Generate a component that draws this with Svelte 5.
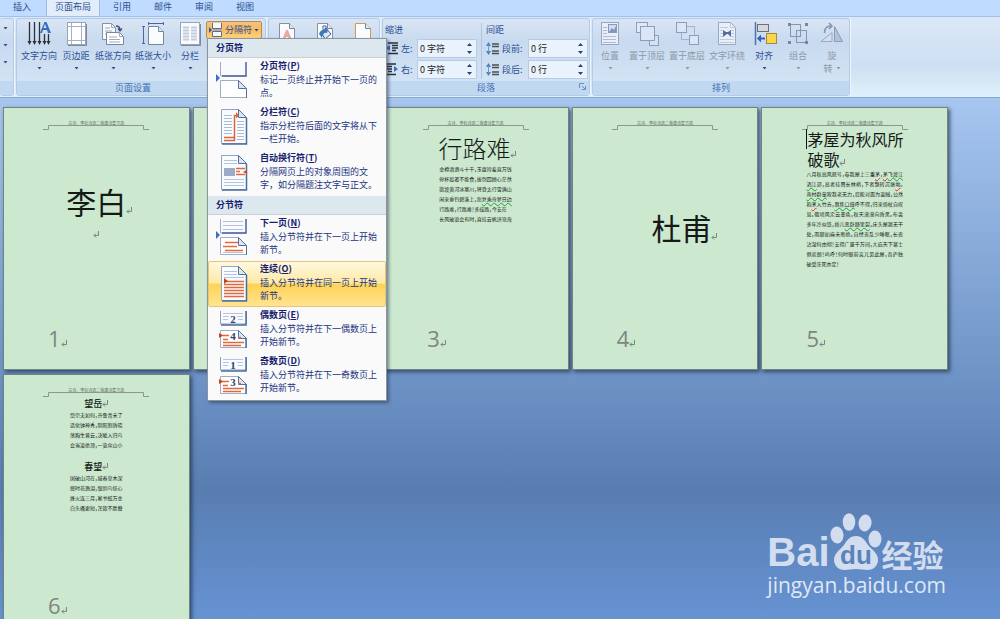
<script lang="ts">
    const tabs = ['插入', '页面布局', '引用', '邮件', '审阅', '视图'];

    const setupTools = [
        { icon: 'direction', label: '文字方向' },
        { icon: 'margins', label: '页边距' },
        { icon: 'orientation', label: '纸张方向' },
        { icon: 'size', label: '纸张大小' },
        { icon: 'columns', label: '分栏' }
    ];

    const arrangeTools = [
        { icon: 'position', label: '位置', disabled: true },
        { icon: 'front', label: '置于顶层', disabled: true },
        { icon: 'back', label: '置于底层', disabled: true },
        { icon: 'wrap', label: '文字环绕', disabled: true },
        { icon: 'align', label: '对齐', disabled: false },
        { icon: 'group', label: '组合', disabled: true }
    ];

    const breakMenu = [
        {
            title: '分页符',
            items: [
                { icon: 'page', name: '分页符', key: 'P', lines: ['标记一页终止并开始下一页的', '点。'] },
                { icon: 'column', name: '分栏符', key: 'C', lines: ['指示分栏符后面的文字将从下', '一栏开始。'] },
                { icon: 'textwrap', name: '自动换行符', key: 'T', lines: ['分隔网页上的对象周围的文', '字，如分隔题注文字与正文。'] }
            ]
        },
        {
            title: '分节符',
            items: [
                { icon: 'next', name: '下一页', key: 'N', lines: ['插入分节符并在下一页上开始', '新节。'] },
                { icon: 'continuous', name: '连续', key: 'O', lines: ['插入分节符并在同一页上开始', '新节。'] },
                { icon: 'even', name: '偶数页', key: 'E', lines: ['插入分节符并在下一偶数页上', '开始新节。'] },
                { icon: 'odd', name: '奇数页', key: 'D', lines: ['插入分节符并在下一奇数页上', '开始新节。'] }
            ]
        }
    ];

    let activeTab = $state('页面布局');
    let hovered = $state('O');
    let indent = $state({ left: '0 字符', right: '0 字符' });
    let spacing = $state({ before: '0 行', after: '0 行' });

    // a segment is [text, optional proofing mark]
    const xinglunan = [
        [['金樽清酒斗十千，玉盘珍羞直万钱']],
        [['停杯投箸不能食，拔剑四顾心茫然']],
        [['欲渡黄河冰塞川，将登太行雪满山']],
        [['闲来垂钓碧溪上，忽'], ['复乘舟梦日边', 'grammar']],
        [['行路难，行路难！多歧路，今安在']],
        [['长风破浪会有时，直挂云帆济沧海']]
    ];

    const maowu = [
        [['八月秋高风怒号，卷我屋上三重'], ['茅', 'spell'], ['，'], ['茅', 'spell'], ['飞渡江', 'grammar']],
        [['洒江', 'grammar'], ['郊，高者挂罥长林梢，下者飘转沉塘'], ['坳', 'spell'], ['。']],
        [['南村群童', 'grammar'], ['欺我老无力，忍能对面为盗贼，公然']],
        [['抱'], ['茅', 'spell'], ['入竹去，'], ['唇焦口燥', 'grammar'], ['呼不得，归来倚杖自叹']],
        [['息。俄顷风定云墨色，秋天漠漠向昏黑。布衾']],
        [['多年冷似铁，娇儿'], ['恶卧踏里裂', 'grammar'], ['，床头屋漏无干']],
        [['处，雨脚如麻未断绝。自经丧乱少睡眠，长夜']],
        [['沾湿何由彻！安得广厦千万间，大庇天下寒士']],
        [['俱欢颜！呜呼！何时眼前突兀见此屋，吾庐独']],
        [['破受冻死亦足！']]
    ];

    const wangyue = [
        [['岱宗夫如何，齐鲁青未了']],
        [['造化钟神秀，阴阳割昏晓']],
        [['荡胸生曾云，决眦入归鸟']],
        [['会当凌绝顶，一览众山小']]
    ];

    const chunwang = [
        [['国破山河在，城春草木深']],
        [['感时花溅泪，恨别鸟惊心']],
        [['烽火连三月，家书抵万金']],
        [['白头搔更短，浑欲不胜簪']]
    ];
</script>

{#snippet caret()}
    <svg class="caret" width="5" height="3" viewBox="0 0 5 3"><path d="M.5 0h4l-2 2.500z" fill="currentColor" /></svg>
{/snippet}

{#snippet toolIcon(name)}
    <svg class="tool-icon" width="26" height="26" viewBox="0 0 26 26" fill="none">
        {#if name === 'direction'}
            <path d="M3.500 1v20M8.500 1v20M13.500 1v20M18.500 13v8M22.500 13v8" stroke="#2e3238" stroke-width="1.300" />
            <path d="M1.500 20h4l-2 4zM6.500 20h4l-2 4zM11.500 20h4l-2 4zM16.500 20h4l-2 4zM20.500 20h4l-2 4z" fill="#2e3238" />
            <path d="M14 12l4.500-11h2l4.500 11h-3l-1-3h-4l-1 3zM17.500 7h3L19 3z" fill="#3b6bc0" />
        {:else if name === 'margins'}
            <rect x="4.500" y="1.500" width="18" height="22" fill="#fff" stroke="#98a5b9" />
            <path d="M8.500 2v21M18.500 2v21M5 5.500h17M5 19.500h17" stroke="#a5b0c2" />
            <path d="M5 24.500h18.500V3" stroke="#7c899e" />
        {:else if name === 'orientation'}
            <path d="M2.500 2.500h9l4 4v12h-13z" fill="#f7f9fc" stroke="#8391a9" />
            <path d="M11.500 2.500v4h4M5 7h5M5 10h7M5 13h5" stroke="#9faabd" />
            <path d="M6.500 11.500h13l4 4v8h-17z" fill="#fff" stroke="#7586a2" />
            <path d="M19.500 11.500v4h4M9 16h8M9 18.500h11M9 21h11" stroke="#9faabd" />
            <path d="M16 5c3 0 4 2 4 4M18 7.500l2 2.500 2-2.500" stroke="#44516c" stroke-width="1.300" />
        {:else if name === 'size'}
            <path d="M8.500 5.500h10l5 5v13h-15z" fill="#fbfcfe" stroke="#7586a2" />
            <path d="M18.500 5.500v5h5" fill="#dfe7f3" stroke="#7586a2" />
            <path d="M8 2.500h16M8.500 1v3M23.500 1v3M3.500 5v18M2 5.500h3M2 22.500h3" stroke="#4a64a6" />
        {:else if name === 'columns'}
            <rect x="3.500" y="1.500" width="19" height="22" fill="#f8fafd" stroke="#98a5b9" />
            <path d="M6 6.500h6M6 9.500h6M6 12.500h6M6 15.500h6M6 18.500h6M14 6.500h6M14 9.500h6M14 12.500h6M14 15.500h6M14 18.500h6" stroke="#c3cddf" stroke-width="2" />
            <path d="M4 24.500h19.500V3" stroke="#7c899e" />
        {:else if name === 'position'}
            <rect x="4.500" y="1.500" width="17" height="22" fill="#e9effa" stroke="#98a7c3" />
            <rect x="11.500" y="3.500" width="8" height="8" fill="#d1dcef" stroke="#8798bb" />
            <path d="M12 11l3-4 2 2 2-4v6z" fill="#8294b8" />
            <path d="M6 6.500h4M6 9.500h4M6 12.500h4M6 15.500h13M6 18.500h13M6 21.500h13" stroke="#aebbd2" />
        {:else if name === 'front'}
            <rect x="2.500" y="1.500" width="11" height="10" fill="#e1e9f6" stroke="#8f9db8" />
            <rect x="15.500" y="14.500" width="9" height="10" fill="#d5e0f1" stroke="#8f9db8" />
            <rect x="6.500" y="5.500" width="14" height="14" fill="#dae5f5" stroke="#8f9db8" />
        {:else if name === 'back'}
            <rect x="7.500" y="5.500" width="13" height="13" fill="#d1dff2" stroke="#a7b3ca" />
            <rect x="2.500" y="1.500" width="10" height="10" fill="#dae5f5" stroke="#8f9db8" />
            <rect x="15.500" y="14.500" width="9" height="9" fill="#dae5f5" stroke="#8f9db8" />
        {:else if name === 'wrap'}
            <path d="M4.500 1.500h12l5 5v17h-17z" fill="#e8eff9" stroke="#98a7c3" />
            <path d="M16.500 1.500v5h5M6 6.500h8M6 9.500h3M17 9.500h3M6 12.500h3M17 12.500h3M6 15.500h3M17 15.500h3M6 18.500h14M6 21.500h14" stroke="#c0cbde" />
            <path d="M9 9l3 2h2l3-2v7l-3-3h-1l-4 3z" fill="#536d9c" />
        {:else if name === 'align'}
            <path d="M4.500 1v23" stroke="#5471a6" stroke-width="1.500" />
            <rect x="6.500" y="3.500" width="11" height="7" fill="#d6d8dc" stroke="#68717f" />
            <rect x="15.500" y="12.500" width="10" height="10" fill="#fbd54b" stroke="#a4883c" />
            <path d="M6 17.500l4-4v3h4v2h-4v3z" fill="#3362bd" />
        {:else if name === 'group'}
            <rect x="5.500" y="3.500" width="10" height="12" stroke="#8495b3" />
            <rect x="11.500" y="9.500" width="10" height="12" stroke="#8495b3" />
            <path d="M3 2h3v3H3zM20 2h3v3h-3zM3 20h3v3H3zM20 20h3v3h-3z" fill="#7587a8" />
        {:else if name === 'rotate'}
            <path d="M2 20.500h11v-9z" fill="#d5dfee" stroke="#9aa8c0" />
            <path d="M15.500 20.500V5.500l8 15z" fill="#b3c2d8" stroke="#8b9bb8" />
            <path d="M5.500 12c0-5 3-7 6-7M10 2l3 3-3 3" stroke="#8193b3" stroke-width="1.500" />
        {/if}
    </svg>
{/snippet}

{#snippet backgroundIcon(name)}
    <svg width="20" height="22" viewBox="0 0 20 22" fill="none">
        <path d="M2.500 1.500h10l5 5v15h-15z" fill="#fbfcfe" stroke={name === 'border' ? '#d7964a' : '#8391a9'} />
        <path d="M12.500 1.500v5h5" fill="#e2e9f4" stroke="#7586a2" />
        {#if name === 'watermark'}
            <path d="M5 18l4-10h2l4 10h-3l-1-3H9l-1 3z" fill="#e9aaa5" />
        {:else if name === 'color'}
            <path d="M6 10l5-4 5 6-6 5z" fill="#dbe7f5" stroke="#45608a" />
            <path d="M4 12c1-4 6-6 9-4l-1 3c-3-1-4 1-5 5z" fill="#3c77b8" />
            <path d="M8 7V4h3v4" stroke="#45608a" />
        {/if}
    </svg>
{/snippet}

{#snippet menuIcon(name)}
    <svg class="menu-icon" width="34" height="40" viewBox="0 0 34 40" fill="none">
        {#if name === 'page' || name === 'next'}
            <path d="M5 1v13h25V1z" fill="#f8faff" />
            <path d="M4.500 1v14h26" stroke="#9eacc4" />
            <path d="M30 1v14H6" stroke="#4a6499" stroke-width="1.500" />
            <path d="M4.500 19.500h18l8 8v9h-26z" fill="#fff" stroke="#a0aec5" />
            <path d="M22.500 19.500v8h8z" fill="#dae4f2" stroke="#5b7098" />
            <path d="M30.500 28v9" stroke="#5b7098" />
            <path d="M0 13l4 4-4 4z" fill="#3a6fc9" />
            {#if name === 'next'}
                <path d="M7 3.500h20M7 7.500h20M7 11.500h20M7 34.500h20" stroke="#b4c1d6" />
                <path d="M9 24.500h13M7 28.500h14M9 32.500h18" stroke="#e2693c" stroke-width="1.500" />
            {/if}
        {:else if name === 'even' || name === 'odd'}
            <path d="M4.500 1v13h26V1" fill="#f8faff" stroke="#8b9dbb" />
            <path d="M30 1v14H5" stroke="#4a6f9c" stroke-width="1.500" />
            <path d="M7 3.500h20M7 6.500h6M21 6.500h6M7 9.500h5M22 9.500h5" stroke="#b9c6da" />
            <path d="M4.500 20.500h18l8 8v9h-26z" fill="#fff" stroke="#9eacc4" />
            <path d="M22.500 20.500v8h8z" fill="#dbe6f4" stroke="#56709d" />
            <path d="M30 28v10" stroke="#4a6f9c" stroke-width="1.500" />
            <path d="M4 25.500h9M22 27.500h3M7 29.500h5M7 32.500h21M7 35.500h18" stroke="#e2693c" stroke-width="1.300" />
            <path d="M3 23l4 2.500L3 28z" fill="#c8431d" />
            <text x="17" y="13" class="icon-number">{name === 'even' ? 2 : 1}</text>
            <text x="17" y="30" class="icon-number">{name === 'even' ? 4 : 3}</text>
        {:else}
            <path d="M5.500 2.500h17l8 8v26h-25z" fill="#f8fbff" stroke="#92a4c0" />
            <path d="M22.500 2.500v8h8z" fill="#dbe6f4" stroke="#56709d" />
            <path d="M30.500 11v26H6" stroke="#4a6f9c" stroke-width="1.500" />
            {#if name === 'column'}
                <path d="M8 8.500h8M8 11.500h8M8 14.500h8M8 17.500h8M8 20.500h8M8 23.500h8M8 26.500h8M21 14.500h7M21 17.500h7M21 20.500h7M21 23.500h7M21 26.500h7M21 29.500h7M21 32.500h7" stroke="#aabbd3" />
                <path d="M8 30.500h10M8 33.500h10.500V8.500h3" stroke="#dd653b" stroke-width="1.500" />
                <path d="M20 5l3 3.500-3 3z" fill="#dd653b" />
            {:else if name === 'textwrap'}
                <path d="M8 7.500h13M8 10.500h13M8 26.500h20M8 29.500h20M8 32.500h20" stroke="#b6c4d8" />
                <rect x="8" y="15" width="11" height="8" fill="#9aacc9" />
                <path d="M20 15.500h9M20 18.500h4M20 21.500h9" stroke="#e2693c" stroke-width="1.500" />
                <path d="M27 19l4-2v4z" fill="#c8431d" />
            {:else}
                <path d="M8 7.500h13M8 10.500h13M8 13.500h20" stroke="#b6c4d8" />
                <path d="M11 17.500h17M8 20.500h20M8 23.500h20M8 26.500h20M8 29.500h20M8 32.500h20" stroke="#e2693c" stroke-width="1.500" />
                <path d="M8 14l4 3-4 3z" fill="#c8431d" />
            {/if}
        {/if}
    </svg>
{/snippet}

{#snippet paraIcon(kind)}
    <svg width="14" height="13" viewBox="0 0 14 13" fill="none">
        {#if kind === 'left' || kind === 'right'}
            <g transform={kind === 'right' ? 'translate(14 0) scale(-1 1)' : undefined}>
                <path d="M3 1h10M7 3.500h6M7 6h6M7 8.500h4M3 11.500h10" stroke="#2b2f36" stroke-width="1.500" />
                <path d="M5 3v6L1 6z" fill="#3a6fc9" />
            </g>
        {:else}
            <path d="M6 2h7M6 4.500h7M6 9h7M6 11.500h7" stroke="#4b4f57" stroke-width="1.500" />
            <path d="M0 4l2.500-4L5 4zM0 9l2.500 4L5 9z" fill="#4c7fc4" />
            <path d="M2.500 3v7" stroke="#6f97d0" />
        {/if}
    </svg>
{/snippet}

{#snippet returnMark()}
    <svg class="return" width="6" height="7" viewBox="0 0 6 7" fill="none">
        <path d="M5.500 0v4.500H1M3 2.500l-2 2 2 2" stroke="#7d857f" />
    </svg>
{/snippet}

{#snippet numberField(id, label, kind, store, prop)}
    <div class="field">
        {@render paraIcon(kind)}
        <label for={id}>{label}</label>
        <div class="spin">
            <input {id} type="text" bind:value={store[prop]} />
            <div class="spin-buttons">
                <button aria-label="增加"><svg width="5" height="3" viewBox="0 0 5 3"><path d="M0 3h5L2.500 0z" fill="#26457f" /></svg></button>
                <button aria-label="减少"><svg width="5" height="3" viewBox="0 0 5 3"><path d="M0 0h5L2.500 3z" fill="#26457f" /></svg></button>
            </div>
        </div>
    </div>
{/snippet}

{#snippet poem(lines, justified = false)}
    <div class="poem" class:justified>
        {#each lines as line}
            <p>{#each line as [text, mark]}<span class={mark}>{text}</span>{/each}</p>
        {/each}
    </div>
{/snippet}

{#snippet page(number, content)}
    <article class="page">
        <header>
            <span>古诗、李杜诗选二卷唐诗集节选</span>
            <svg width="106" height="6" viewBox="0 0 106 6" fill="none"><path d="M0 4.500h5.500v-4h95v4h5.500" stroke="#8b988e" /></svg>
        </header>
        {@render content()}
        <footer>{number}{@render returnMark()}</footer>
    </article>
{/snippet}

{#snippet pageOne()}
    <h1 class="name">李白{@render returnMark()}</h1>
    <p class="blank">{@render returnMark()}</p>
{/snippet}

{#snippet pageTwo()}{/snippet}

{#snippet pageThree()}
    <h2 class="poem-title">行路难{@render returnMark()}</h2>
    {@render poem(xinglunan)}
{/snippet}

{#snippet pageFour()}
    <h1 class="name right">杜甫{@render returnMark()}</h1>
{/snippet}

{#snippet pageFive()}
    <h2 class="long-title">茅屋为秋风所<br />破歌{@render returnMark()}</h2>
    {@render poem(maowu, true)}
{/snippet}

{#snippet pageSix()}
    <h3>望岳{@render returnMark()}</h3>
    {@render poem(wangyue)}
    <h3 class="second">春望{@render returnMark()}</h3>
    {@render poem(chunwang)}
{/snippet}

<div class="word">
    <nav class="tabs">
        {#each tabs as tab}
            <button class="tab" class:active={tab === activeTab} onclick={() => (activeTab = tab)}>{tab}</button>
        {/each}
    </nav>

    <div class="ribbon">
        <section class="group stub">
            <div class="stub-carets">{@render caret()}{@render caret()}{@render caret()}</div>
            <div class="group-label"></div>
        </section>

        <section class="group setup">
            <div class="tools">
                {#each setupTools as tool}
                    <button class="tool">
                        {@render toolIcon(tool.icon)}
                        <span>{tool.label}</span>
                        {@render caret()}
                    </button>
                {/each}
                <div class="breaks">
                    <button class="breaks-button" aria-haspopup="menu" aria-expanded="true">
                        <svg width="14" height="14" viewBox="0 0 14 14" fill="none">
                            <path d="M3.500 0v5.500h9V0M3.500 13.500v-5h9v5z" fill="#f4f8ff" stroke="#5b7098" />
                            <path d="M0 4l3 3-3 3z" fill="#3056a5" />
                            <path d="M4 7h9" stroke="#8a97ae" />
                        </svg>
                        <span>分隔符</span>
                        {@render caret()}
                    </button>
                    <div class="menu" role="menu">
                        {#each breakMenu as part}
                            <div class="menu-heading">{part.title}</div>
                            {#each part.items as item}
                                <button
                                    class="menu-item"
                                    class:hot={hovered === item.key}
                                    role="menuitem"
                                    onmouseenter={() => (hovered = item.key)}
                                >
                                    {@render menuIcon(item.icon)}
                                    <span class="menu-text">
                                        <strong>{item.name}(<u>{item.key}</u>)</strong>
                                        {#each item.lines as line}<span>{line}</span>{/each}
                                    </span>
                                </button>
                            {/each}
                        {/each}
                    </div>
                </div>
            </div>
            <div class="group-label">页面设置</div>
        </section>

        <section class="group background">
            <div class="background-tools">
                {@render backgroundIcon('watermark')}
                {@render backgroundIcon('color')}
                {@render backgroundIcon('border')}
            </div>
            <div class="group-label"></div>
        </section>

        <section class="group paragraph">
            <div class="fields">
                <div class="field-column">
                    <span class="field-heading">缩进</span>
                    {@render numberField('indent-left', '左:', 'left', indent, 'left')}
                    {@render numberField('indent-right', '右:', 'right', indent, 'right')}
                </div>
                <div class="field-column">
                    <span class="field-heading">间距</span>
                    {@render numberField('space-before', '段前:', 'before', spacing, 'before')}
                    {@render numberField('space-after', '段后:', 'after', spacing, 'after')}
                </div>
            </div>
            <div class="group-label">
                段落
                <button class="launcher" aria-label="段落设置">
                    <svg width="7" height="7" viewBox="0 0 7 7" fill="none"><path d="M.5 5V.5H5M3 3l3 3M6.500 3v3.500H3" stroke="#6f8fbd" /></svg>
                </button>
            </div>
        </section>

        <section class="group arrange">
            <div class="tools">
                {#each arrangeTools as tool}
                    <button class="tool" disabled={tool.disabled}>
                        {@render toolIcon(tool.icon)}
                        <span>{tool.label}</span>
                        {@render caret()}
                    </button>
                {/each}
                <button class="tool" disabled>
                    {@render toolIcon('rotate')}
                    <span>旋</span>
                    <span class="with-caret">转{@render caret()}</span>
                </button>
            </div>
            <div class="group-label">排列</div>
        </section>
    </div>

    <main>
        {@render page(1, pageOne)}
        {@render page(2, pageTwo)}
        {@render page(3, pageThree)}
        {@render page(4, pageFour)}
        {@render page(5, pageFive)}
        {@render page(6, pageSix)}
    </main>

    <div class="watermark">
        <div class="brand">
            <span class="bai">Bai</span>
            <svg width="52" height="58" viewBox="0 0 52 58">
                <g fill="#d2deef">
                    <ellipse cx="7" cy="22" rx="6.500" ry="8.500" transform="rotate(-6 7 22)" />
                    <ellipse cx="19" cy="9" rx="6.300" ry="8.700" />
                    <ellipse cx="35" cy="10" rx="6.500" ry="8.500" transform="rotate(8 35 10)" />
                    <ellipse cx="45" cy="26" rx="6.500" ry="8.500" />
                    <path d="M26 23c6 0 9 4 12 9 4 5 10 8 10 15 0 6-5 10-10 10-4 0-8-1-12-1s-8 1-12 1C9 57 4 53 4 47c0-7 6-10 10-15 3-5 6-9 12-9z" />
                </g>
                <text x="26" y="51" class="du">du</text>
            </svg>
            <span class="jingyan">经验</span>
        </div>
        <a href="#jingyan">jingyan.baidu.com</a>
    </div>
</div>

<style>
    :global(body) {
        margin: 0;
    }

    .word {
        position: relative;
        display: flex;
        flex-direction: column;
        height: 100vh;
        overflow: hidden;
        background: linear-gradient(#a7c6f0 98px, #7398ca 350px, #587db1 490px, #6793d3);
        color: #2a4f94;
        font: 9px/12px "Noto Sans CJK SC", sans-serif;
    }

    button, input {
        font: inherit;
        color: inherit;
        border: 0;
        padding: 0;
        margin: 0;
        background: none;
    }

    p, h1, h2, h3 { margin: 0; font-weight: 400; }

    .tabs {
        display: flex;
        flex: none;
        gap: 1px;
        height: 16px;
        padding-left: 2px;
        background: #bfdbff;
    }

    .tab { padding: 0 11px 3px; line-height: 13px; }

    .tab.active {
        margin: 0 1px 0 3px;
        padding: 0 8px 3px;
        border: solid #9bbcec;
        border-width: 0 1px;
        background: #e2edf9;
    }

    .ribbon {
        display: flex;
        flex: none;
        gap: 2px;
        height: 78px;
        padding: 1px 0 1px;
        border-top: 1px solid #a0c1ee;
        border-bottom: 1px solid #86a8ce;
        background: linear-gradient(#dce8f6, #cddff2 60%, #dff1fb);
    }

    .group {
        display: flex;
        flex-direction: column;
        box-sizing: border-box;
        border: 1px solid #b3cbe6;
        border-radius: 3px;
        background: linear-gradient(#d9e5f4, #c8daef 30%, #d6e6f6);
        box-shadow: 1px 0 0 #eef5fc;
    }

    .group-label {
        position: relative;
        height: 14px;
        line-height: 13px;
        margin-top: auto;
        text-align: center;
        color: #4370b4;
        background: #c1d9f0;
    }

    .stub { width: 14px; border-left: 0; }
    .stub-carets { display: flex; flex-direction: column; gap: 14px; padding: 8px 0 0 3px; }
    .setup { width: 250px; }
    .setup .group-label { padding-right: 16px; }
    .background { width: 112px; }
    .background-tools { display: flex; gap: 18px; padding: 3px 0 0 8px; }
    .paragraph { width: 208px; }
    .arrange { width: 258px; }

    .tools { display: flex; gap: 4px; padding: 2px 0 0 4px; }
    .arrange .tools { padding-left: 2px; }

    .tool {
        display: flex;
        flex-direction: column;
        align-items: center;
        min-width: 30px;
        height: 54px;
        white-space: nowrap;
    }

    .tool span { line-height: 13px; margin-top: 2px; }
    .tool .caret { margin-top: 5px; }
    .tool:disabled { color: #8f98a6; }
    .tool .with-caret { display: flex; align-items: center; gap: 3px; margin: 0; }
    .tool .with-caret .caret { margin: 0; }
    .tool-icon { flex: none; }

    .breaks { position: relative; margin-left: -3px; }

    .breaks-button {
        display: flex;
        align-items: center;
        gap: 2px;
        width: 56px;
        height: 18px;
        box-sizing: border-box;
        padding-left: 2px;
        border: 1px solid #b58d52;
        border-radius: 2px;
        background: linear-gradient(#f6c281, #fbb95c 45%, #fdd47c);
        white-space: nowrap;
    }

    .menu {
        position: absolute;
        z-index: 10;
        top: 17px;
        left: 1px;
        width: 178px;
        padding-bottom: 1px;
        border: 1px solid #8c949f;
        background: #fafafa;
        box-shadow: 2px 2px 3px rgba(30, 45, 70, 0.5);
        color: #22337f;
    }

    .menu-heading {
        height: 18px;
        padding-left: 8px;
        border-bottom: 1px solid #c9cfd6;
        background: #dde7ee;
        line-height: 17px;
        font-weight: 700;
        color: #15206e;
    }

    .menu-item {
        display: flex;
        gap: 10px;
        width: 100%;
        height: 46px;
        padding: 0 0 0 7px;
        border: 1px solid transparent;
        text-align: left;
    }

    .menu-item.hot {
        border-color: #e3c57e;
        border-radius: 2px;
        background: linear-gradient(#fef8de, #fee9a5 48%, #fed254 50%, #ffe490);
    }

    .menu-icon { flex: none; margin-top: 2px; }
    .menu-text { display: flex; flex-direction: column; line-height: 13px; white-space: nowrap; }
    .menu-text strong { line-height: 14px; color: #15206e; }

    .icon-number {
        font: 700 11px "Liberation Serif", serif;
        fill: #2d4674;
        text-anchor: middle;
    }

    .fields { display: flex; padding: 4px 1px 0 2px; }

    .field-column {
        display: flex;
        flex-direction: column;
        gap: 2px;
        box-sizing: border-box;
        width: 96px;
        padding-right: 4px;
    }

    .field-column + .field-column {
        flex: 1;
        padding: 0 0 0 4px;
        border-left: 1px solid #afc5e2;
    }

    .field-heading { line-height: 14px; }
    .field { display: flex; align-items: center; gap: 2px; height: 19px; }
    .field svg { flex: none; }
    .field label { flex: 1; white-space: nowrap; }

    .spin {
        display: flex;
        width: 60px;
        height: 19px;
        box-sizing: border-box;
        border: 1px solid #b5cbe8;
        background: #eaf2fb;
    }

    .spin input { flex: 1; min-width: 0; padding-left: 2px; color: #1b1b1b; outline: none; }
    .spin-buttons { display: flex; flex-direction: column; width: 13px; }
    .spin-buttons button { display: flex; flex: 1; align-items: center; justify-content: center; }
    .launcher { position: absolute; right: 3px; top: 2px; display: flex; }

    main {
        display: grid;
        grid-template-columns: repeat(5, 1fr);
        grid-auto-rows: 263px;
        gap: 4px 3px;
        padding: 9px 52px 0 3px;
    }

    .page {
        display: flex;
        flex-direction: column;
        align-items: center;
        min-width: 0;
        box-sizing: border-box;
        padding: 13px 44px 18px;
        border: 1px solid #71857c;
        background: #cce8cf;
        box-shadow: 2px 2px 4px rgba(25, 42, 72, 0.7);
        color: #161a17;
    }

    .page header {
        display: flex;
        flex-direction: column;
        align-items: center;
        font-size: 4px;
        line-height: 4px;
        color: #5d6660;
        white-space: nowrap;
    }

    .page footer {
        align-self: flex-start;
        margin-top: auto;
        font: 22px/26px "Open Sans", sans-serif;
        color: #808581;
    }

    .name {
        margin-top: 50px;
        padding-left: 6px;
        font-size: 30px;
        line-height: 40px;
        white-space: nowrap;
    }

    .name.right { align-self: flex-end; margin: 76px -4px 0 0; }
    .blank { line-height: 20px; margin-top: 4px; }

    .poem-title {
        margin-top: 1px;
        padding-left: 4px;
        font-size: 24px;
        line-height: 32px;
        font-weight: 300;
        white-space: nowrap;
    }

    .long-title {
        align-self: flex-start;
        margin-top: -2px;
        border-left: 1px solid #111;
        border-image: linear-gradient(#111 50%, transparent 50%) 1;
        font-size: 16px;
        line-height: 20px;
        white-space: nowrap;
    }

    .page h3 { font-size: 9px; line-height: 12px; font-weight: 500; }
    .page h3.second { margin-top: 11px; }

    .poem {
        font-size: 5px;
        line-height: 10px;
        font-weight: 700;
        font-feature-settings: "halt";
        white-space: nowrap;
    }

    .poem.justified { align-self: stretch; }
    .justified p { text-align: justify; text-align-last: justify; }
    .justified p:last-child { text-align-last: left; }
    .grammar { text-decoration: underline wavy #18a52c 1px; }
    .spell { text-decoration: underline wavy #e0281c 1px; }

    .watermark {
        position: absolute;
        right: 54px;
        bottom: 20px;
        display: flex;
        flex-direction: column;
        color: #d2deef;
    }

    .brand { display: flex; align-items: flex-end; height: 58px; }
    .bai { font: 700 40px/38px "Liberation Sans", sans-serif; }
    .jingyan { font-size: 31px; line-height: 34px; font-weight: 700; }
    .du { font: 700 26px "Liberation Sans", sans-serif; fill: #5b83bb; text-anchor: middle; }
    .watermark a { font: 21px/28px "Open Sans", sans-serif; color: #dfe8f5; text-decoration: none; }
</style>
